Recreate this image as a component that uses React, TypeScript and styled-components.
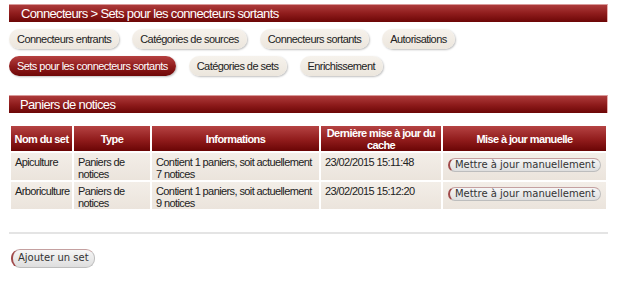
import React from "react";
import styled, { createGlobalStyle } from "styled-components";

const GlobalStyle = createGlobalStyle`
  body {
    margin: 0;
    background: #ffffff;
    font-family: "Liberation Sans", Arial, sans-serif;
  }
`;

const tabsRow1 = [
  "Connecteurs entrants",
  "Catégories de sources",
  "Connecteurs sortants",
  "Autorisations",
];
const tabsRow2 = [
  "Sets pour les connecteurs sortants",
  "Catégories de sets",
  "Enrichissement",
];

const rows = [
  {
    name: "Apiculture",
    type: "Paniers de notices",
    info: "Contient 1 paniers, soit actuellement 7 notices",
    date: "23/02/2015 15:11:48",
  },
  {
    name: "Arboriculture",
    type: "Paniers de notices",
    info: "Contient 1 paniers, soit actuellement 9 notices",
    date: "23/02/2015 15:12:20",
  },
];

const App = () => {
  return (
    <Page>
      <GlobalStyle />
      <TitleBar>Connecteurs &gt; Sets pour les connecteurs sortants</TitleBar>
      <Tabs>
        <TabRow>
          {tabsRow1.map((t) => (
            <Tab key={t}>{t}</Tab>
          ))}
        </TabRow>
        <TabRow>
          {tabsRow2.map((t, i) => (
            <Tab key={t} $active={i === 0}>
              {t}
            </Tab>
          ))}
        </TabRow>
      </Tabs>
      <SectionBar>Paniers de notices</SectionBar>
      <Table>
        <colgroup>
          <col style={{ width: 61 }} />
          <col style={{ width: 76 }} />
          <col style={{ width: 167 }} />
          <col style={{ width: 120 }} />
          <col />
        </colgroup>
        <thead>
          <tr>
            <Th>Nom du set</Th>
            <Th>Type</Th>
            <Th>Informations</Th>
            <Th>Dernière mise à jour du cache</Th>
            <Th>Mise à jour manuelle</Th>
          </tr>
        </thead>
        <tbody>
          {rows.map((r) => (
            <tr key={r.name}>
              <Td>{r.name}</Td>
              <Td>{r.type}</Td>
              <Td>{r.info}</Td>
              <Td>{r.date}</Td>
              <Td $center>
                <PillButton>Mettre à jour manuellement</PillButton>
              </Td>
            </tr>
          ))}
        </tbody>
      </Table>
      <Rule />
      <Footer>
        <PillButton $large>Ajouter un set</PillButton>
      </Footer>
    </Page>
  );
};

export default App;

const Page = styled.div`
  width: 599px;
  padding: 4px 0 0 9px;
`;

const TitleBar = styled.div`
  height: 17px;
  line-height: 17px;
  padding-left: 12px;
  color: #ffffff;
  font-size: 13px;
  letter-spacing: -0.65px;
  background: linear-gradient(to bottom, #ad3b3b 0%, #8f1c1c 50%, #6c0606 100%);
  border-right: 1px solid #e8b0b0;
  border-top: 1px solid #d99a9a;
`;

const Tabs = styled.div`
  display: flex;
  flex-direction: column;
  gap: 7px;
  margin-top: 7px;
`;

const TabRow = styled.div`
  display: flex;
  gap: 13px;
`;

const Tab = styled.div<{ $active?: boolean }>`
  height: 20px;
  line-height: 20px;
  padding: 0 8px;
  border-radius: 10px;
  font-size: 11px;
  letter-spacing: -0.55px;
  white-space: nowrap;
  color: ${(p) => (p.$active ? "#ffffff" : "#222222")};
  background: ${(p) =>
    p.$active
      ? "linear-gradient(to bottom, #b54040 0%, #8e1a1a 55%, #6e0707 100%)"
      : "linear-gradient(to bottom, #f6f2ec 0%, #ece6dd 100%)"};
  box-shadow: 1px 1px 2px rgba(0, 0, 0, 0.25);
`;

const SectionBar = styled(TitleBar)`
  margin-top: 19px;
  padding-left: 11px;
`;

const Table = styled.table`
  margin-top: 11px;
  width: 599px;
  border-collapse: separate;
  border-spacing: 2px;
  table-layout: fixed;
  font-size: 11px;
  letter-spacing: -0.6px;
`;

const Th = styled.th`
  height: 25px;
  padding: 0 2px;
  color: #ffffff;
  font-weight: bold;
  font-size: 11px;
  line-height: 12px;
  text-align: center;
  background: linear-gradient(to bottom, #b54343 0%, #911c1c 55%, #6a0505 100%);
`;

const Td = styled.td<{ $center?: boolean }>`
  height: 24px;
  padding: 3px 4px 0;
  vertical-align: top;
  color: #222222;
  line-height: 12px;
  text-align: ${(p) => (p.$center ? "center" : "left")};
  background: linear-gradient(to bottom, #f3eee8 0%, #ebe4dc 100%);
`;

const PillButton = styled.button<{ $large?: boolean }>`
  margin-top: ${(p) => (p.$large ? "0" : "2px")};
  height: ${(p) => (p.$large ? "19px" : "14px")};
  padding: 0 5px;
  border-radius: 9px;
  font-family: "DejaVu Sans", Verdana, sans-serif;
  font-size: 10px;
  letter-spacing: 0;
  line-height: 12px;
  color: #333333;
  background: linear-gradient(to bottom, #f6f6f6 0%, #dedede 100%);
  border: 1px solid #bdbdbd;
  border-left: 2px solid #a04a4a;
  border-top-color: #c4a0a0;
  white-space: nowrap;
`;

const Rule = styled.div`
  height: 2px;
  margin-top: 21px;
  background: #e4e4e4;
`;

const Footer = styled.div`
  padding: 13px 0 0 2px;
`;
